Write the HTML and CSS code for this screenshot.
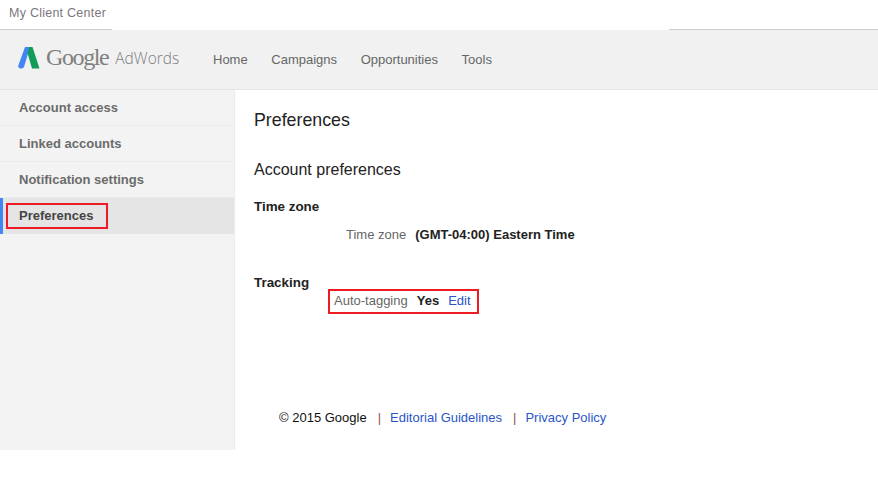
FILE: index.html
```html
<!DOCTYPE html>
<html lang="en">
<head>
    <meta charset="UTF-8">
    <title>Preferences</title>
    <link rel="stylesheet" href="styles.css">
</head>
<body>
    <div class="top-bar">
        <div class="top-tab">My Client Center</div>
        <div class="top-gap"></div>
        <div class="top-rest"></div>
    </div>

    <header class="header">
        <div class="logo">
            <svg class="logo-mark" width="22" height="22" viewBox="0 0 22 22">
                <path d="M7 0 L12 0 L6 20 Q5 21.500 3 21.500 Q0 21.500 0.300 18.500 Z" fill="#4285f4"/>
                <path d="M11 0 L14.500 0 L21.500 21.500 L14 21.500 L9.500 6 Z" fill="#0f9d58"/>
            </svg>
            <span class="logo-google">Google</span>
            <span class="logo-adwords">AdWords</span>
        </div>
        <nav class="nav">
            <a class="nav-link">Home</a>
            <a class="nav-link">Campaigns</a>
            <a class="nav-link">Opportunities</a>
            <a class="nav-link">Tools</a>
        </nav>
    </header>

    <div class="main">
        <aside class="sidebar">
            <div class="side-item">Account access</div>
            <div class="side-item">Linked accounts</div>
            <div class="side-item">Notification settings</div>
            <div class="side-item active"><span class="mark-box">Preferences</span></div>
        </aside>

        <section class="content">
            <h1 class="page-title">Preferences</h1>
            <h2 class="section-title">Account preferences</h2>

            <h3 class="group-title">Time zone</h3>
            <div class="row timezone-row">
                <span class="row-label">Time zone</span>
                <span class="row-value">(GMT-04:00) Eastern Time</span>
            </div>

            <h3 class="group-title tracking-title">Tracking</h3>
            <div class="row tracking-row">
                <span class="row-label">Auto-tagging</span>
                <span class="row-value">Yes</span>
                <a class="link">Edit</a>
            </div>

            <footer class="footer">
                <span>© 2015 Google</span>
                <span class="sep">|</span>
                <a class="link">Editorial Guidelines</a>
                <span class="sep">|</span>
                <a class="link">Privacy Policy</a>
            </footer>
        </section>
    </div>
</body>
</html>
```

FILE: styles.css
```css
:root {
    --panel: #f1f1f1;
    --side: #f3f3f3;
    --line: #e5e5e5;
    --text-dark: #222222;
    --text-grey: #666666;
    --blue: #2a55c9;
    --red: #ed1c24;
}

* {
    box-sizing: border-box;
    margin: 0;
    padding: 0;
}

body {
    background-color: #ffffff;
    font-family: "Liberation Sans", Arial, sans-serif;
    font-size: 13px;
    color: var(--text-dark);
}

.top-bar {
    display: flex;
    height: 30px;
}

.top-tab {
    width: 112px;
    padding: 6px 0 0 9px;
    font-size: 12.500px;
    letter-spacing: 0.25px;
    color: #7d7580;
    border-bottom: 1px solid #cccccc;
}

.top-gap {
    width: 557px;
}

.top-rest {
    flex: 1;
    border-bottom: 1px solid #cccccc;
}

.header {
    display: flex;
    align-items: center;
    height: 60px;
    background-color: var(--panel);
    border-bottom: 1px solid var(--line);
}

.logo {
    display: flex;
    align-items: center;
    width: 213px;
    padding: 0 0 4px 18px;
}

.logo-mark {
    margin-right: 6px;
}

.logo-google {
    font-family: "Liberation Serif", serif;
    font-size: 24px;
    letter-spacing: -1.4px;
    color: #808080;
    margin-right: 7px;
}

.logo-adwords {
    font-family: "Open Sans", sans-serif;
    font-size: 15.500px;
    font-weight: 300;
    color: #808080;
}

.nav {
    display: flex;
    gap: 23.600px;
}

.nav-link {
    color: var(--text-grey);
}

.main {
    display: flex;
    height: 360px;
}

.sidebar {
    width: 235px;
    background-color: var(--side);
    border-right: 1px solid #ebebeb;
    flex-shrink: 0;
}

.side-item {
    display: flex;
    align-items: center;
    height: 36px;
    padding-left: 19px;
    font-size: 13px;
    font-weight: bold;
    color: #6b6b6b;
    border-bottom: 1px solid #ebebeb;
}

.side-item.active {
    position: relative;
    background-color: #e5e5e5;
    border-bottom: none;
    border-left: 3px solid #4285f4;
    padding-left: 16px;
    color: #444444;
}

.mark-box {
    position: absolute;
    left: 3px;
    top: 5px;
    width: 102px;
    height: 26px;
    padding: 3px 0 0 11px;
    border: 2px solid var(--red);
}

.content {
    flex: 1;
    padding: 20px 0 0 19px;
}

.page-title {
    font-size: 17.800px;
    font-weight: normal;
    line-height: 21px;
}

.section-title {
    margin-top: 29px;
    font-size: 16px;
    font-weight: normal;
    line-height: 20px;
}

.group-title {
    margin-top: 17px;
    font-size: 13.400px;
    line-height: 20px;
}

.row-label {
    color: var(--text-grey);
}

.row-value {
    font-weight: bold;
}

.link {
    color: var(--blue);
}

.timezone-row {
    display: flex;
    gap: 9px;
    margin-top: 8px;
    padding-left: 92px;
    line-height: 20px;
    white-space: nowrap;
}

.tracking-title {
    margin-top: 28px;
}

.tracking-row {
    display: flex;
    align-items: center;
    gap: 9px;
    width: 151px;
    height: 25px;
    margin: -4px 0 0 74px;
    padding: 0 0 3px 4px;
    border: 2px solid var(--red);
    white-space: nowrap;
}

.footer {
    display: flex;
    gap: 11px;
    margin: 94px 0 0 25px;
    line-height: 20px;
    color: #111111;
}

.sep {
    margin-right: -2px;
    color: #a05050;
}
```
